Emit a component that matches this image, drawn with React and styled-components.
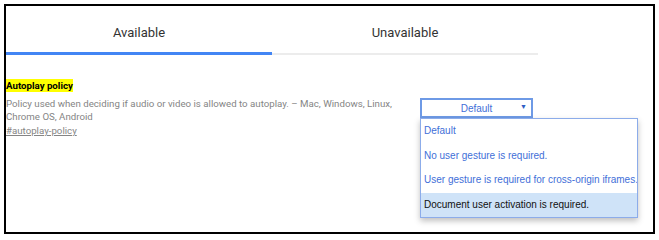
import React from "react";
import styled, { createGlobalStyle } from "styled-components";

const Global = createGlobalStyle`
  body {
    margin: 0;
    background: #fff;
    font-family: Roboto, "Liberation Sans", sans-serif;
  }
`;

const Frame = styled.div`
  margin: 4px;
  width: 647px;
  height: 226px;
  border: 2px solid #000;
`;

const Tabs = styled.div`
  display: flex;
  width: 532px;
  height: 47px;
  border-bottom: 2px solid #ececec;
`;

const Tab = styled.div`
  flex: 1;
  display: flex;
  align-items: center;
  justify-content: center;
  padding-top: 6px;
  font-size: 13px;
  color: #333;
  margin-bottom: ${(p) => (p.$active ? "-2px" : "0")};
  border-bottom: ${(p) => (p.$active ? "3px solid #4285f4" : "none")};
`;

const Row = styled.div`
  display: flex;
  align-items: flex-start;
  padding-top: 24px;
`;

const Info = styled.div`
  width: 414px;
  font-size: 9.7px;
  line-height: 13px;
  color: #858585;
`;

const Title = styled.span`
  background: #ffff00;
  color: #000;
  font-weight: bold;
  font-size: 9.7px;
  padding: 1px 0;
`;

const Desc = styled.div`
  margin-top: 5px;
  width: 395px;
`;

const Link = styled.a`
  display: block;
  margin-top: 1px;
  color: #858585;
  text-decoration: underline;
`;

const SelectWrap = styled.div`
  position: relative;
  margin-top: 19px;
`;

const Select = styled.div`
  position: relative;
  width: 109px;
  height: 16px;
  border: 2px solid #6e9ae6;
  display: flex;
  align-items: center;
  justify-content: center;
  font-family: "Liberation Sans", Arial, sans-serif;
  font-size: 10px;
  color: #3f6fd8;
`;

const Arrow = styled.span`
  position: absolute;
  right: 4px;
  top: 3px;
  font-size: 7px;
  color: #2f5cc4;
`;

const Menu = styled.ul`
  position: absolute;
  left: 0;
  top: 20px;
  width: 216px;
  margin: 0;
  padding: 0;
  list-style: none;
  background: #fff;
  border: 1px solid #8cacea;
  box-shadow: 0 3px 6px rgba(0, 0, 0, 0.25);
  font-family: "Liberation Sans", Arial, sans-serif;
  font-size: 10px;
`;

const Option = styled.li`
  height: 24.5px;
  line-height: 24.5px;
  padding-left: 3px;
  white-space: nowrap;
  overflow: hidden;
  color: ${(p) => (p.$selected ? "#111" : "#3f6fd8")};
  background: ${(p) => (p.$selected ? "#cfe3f8" : "transparent")};
`;

const options = [
  "Default",
  "No user gesture is required.",
  "User gesture is required for cross-origin iframes.",
  "Document user activation is required.",
];

export default function App() {
  return (
    <>
      <Global />
      <Frame>
        <Tabs>
          <Tab $active>Available</Tab>
          <Tab>Unavailable</Tab>
        </Tabs>
        <Row>
          <Info>
            <Title>Autoplay policy</Title>
            <Desc>
              Policy used when deciding if audio or video is allowed to
              autoplay. – Mac, Windows, Linux, Chrome OS, Android
            </Desc>
            <Link>#autoplay-policy</Link>
          </Info>
          <SelectWrap>
            <Select>
              Default
              <Arrow>▼</Arrow>
            </Select>
            <Menu>
              {options.map((o, i) => (
                <Option key={i} $selected={i === 3}>
                  {o}
                </Option>
              ))}
            </Menu>
          </SelectWrap>
        </Row>
      </Frame>
    </>
  );
}
